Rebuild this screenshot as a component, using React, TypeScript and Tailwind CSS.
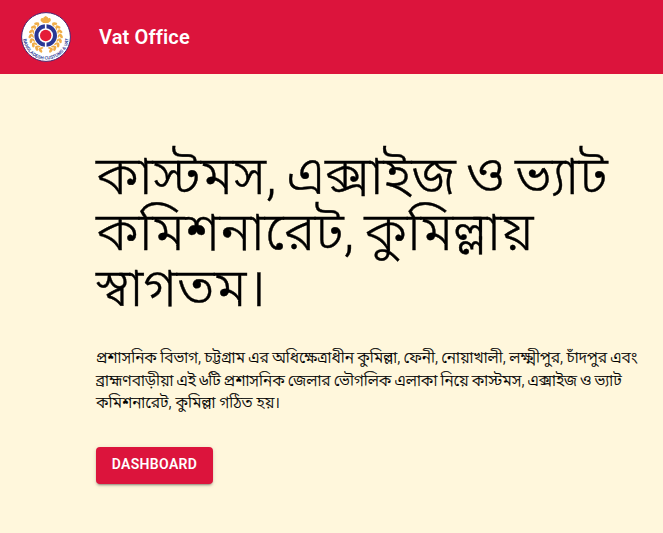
const leafAngles = [-52, -34, -16, 2, 20, 38, 56, 72];

function Wreath() {
  return (
    <>
      {leafAngles.map((angle) => (
        <g key={angle} transform={`rotate(${angle}) translate(14.500 0)`}>
          <ellipse cx="1" rx="1.400" ry="2.600" transform="rotate(-35)" />
          <ellipse cx="-1.600" cy="0.500" rx="1" ry="2.100" transform="rotate(30)" />
        </g>
      ))}
    </>
  );
}

function Emblem() {
  return (
    <svg className="size-[50px] shrink-0" viewBox="-25 -25 50 50" aria-label="Bangladesh Customs and VAT">
      <circle r="24.4" fill="#fff" stroke="#4b2470" strokeWidth="1" />
      <g fill="#f0ad48" transform="translate(-0.300 -1)">
        <Wreath />
        <g transform="scale(-1 1)">
          <Wreath />
        </g>
        <path d="M-5-15C-5.500-18-3.500-18.500-2.500-17.500C-2.500-19-.8-19.500 0-20C1-19.500 2.500-19 2.500-17.500C4-18.500 5.500-18 5-15L2.500-13H-2.500Z" />
      </g>
      <g transform="translate(-0.300 -1.500)">
        <circle r="12.100" fill="#fff" />
        <circle r="9.300" fill="none" stroke="#293795" strokeWidth="4" />
        <path d="M0-12V-6M0 6V12" stroke="#fff" strokeWidth="1.600" />
        <circle r="5.700" fill="#e51c38" />
      </g>
      <path id="emblem-arc" d="M-22.600 2A22.700 22.700 0 0 0 22.600 2" fill="none" />
      <text
        className="font-['Liberation_Sans',sans-serif] font-bold"
        fill="#293795"
        fontSize="4.600"
      >
        <textPath href="#emblem-arc" startOffset="0" textLength="67" lengthAdjust="spacingAndGlyphs">
          BANGLADESH CUSTOMS &amp; VAT
        </textPath>
      </text>
    </svg>
  );
}

export default function App() {
  return (
    <div className="h-[533px] overflow-hidden bg-[#fff7dc] font-['Roboto','Noto_Sans_Bengali',sans-serif] text-black">
      <header className="flex h-[74px] items-center bg-[#dc143c] pl-[21px] text-white">
        <Emblem />
        <span className="ml-7 text-xl font-semibold tracking-[0.150px]">Vat Office</span>
      </header>
      <main className="pl-24 pt-[74px]">
        <h1 className="text-[54px] font-light leading-[56px] [-webkit-text-stroke:0.400px_black] [word-spacing:-3px]">
          <span className="block whitespace-nowrap">কাস্টমস, এক্সাইজ ও ভ্যাট</span>
          <span className="block whitespace-nowrap">কমিশনারেট, কুমিল্লায়</span>
          <span className="block whitespace-nowrap">স্বাগতম।</span>
        </h1>
        <p className="mt-[31px] text-[15.800px] font-light leading-[22.500px] [-webkit-text-stroke:0.200px_black]">
          <span className="block whitespace-nowrap [word-spacing:-0.500px]">প্রশাসনিক বিভাগ, চট্টগ্রাম এর অধিক্ষেত্রাধীন কুমিল্লা, ফেনী, নোয়াখালী, লক্ষ্মীপুর, চাঁদপুর এবং</span>
          <span className="block whitespace-nowrap [word-spacing:-0.800px]">ব্রাহ্মণবাড়ীয়া এই ৬টি প্রশাসনিক জেলার ভৌগলিক এলাকা নিয়ে কাস্টমস, এক্সাইজ ও ভ্যাট</span>
          <span className="block whitespace-nowrap [word-spacing:0.200px]">কমিশনারেট, কুমিল্লা গঠিত হয়।</span>
        </p>
        <button className="mt-[32px] flex h-[37px] w-[117px] items-center justify-center rounded bg-[#dc143c] pb-[3px] text-sm font-semibold tracking-[0.350px] text-white shadow-[0_3px_1px_-2px_rgba(0,0,0,0.2),0_2px_2px_0_rgba(0,0,0,0.14),0_1px_5px_0_rgba(0,0,0,0.12)]">
          DASHBOARD
        </button>
      </main>
    </div>
  );
}
